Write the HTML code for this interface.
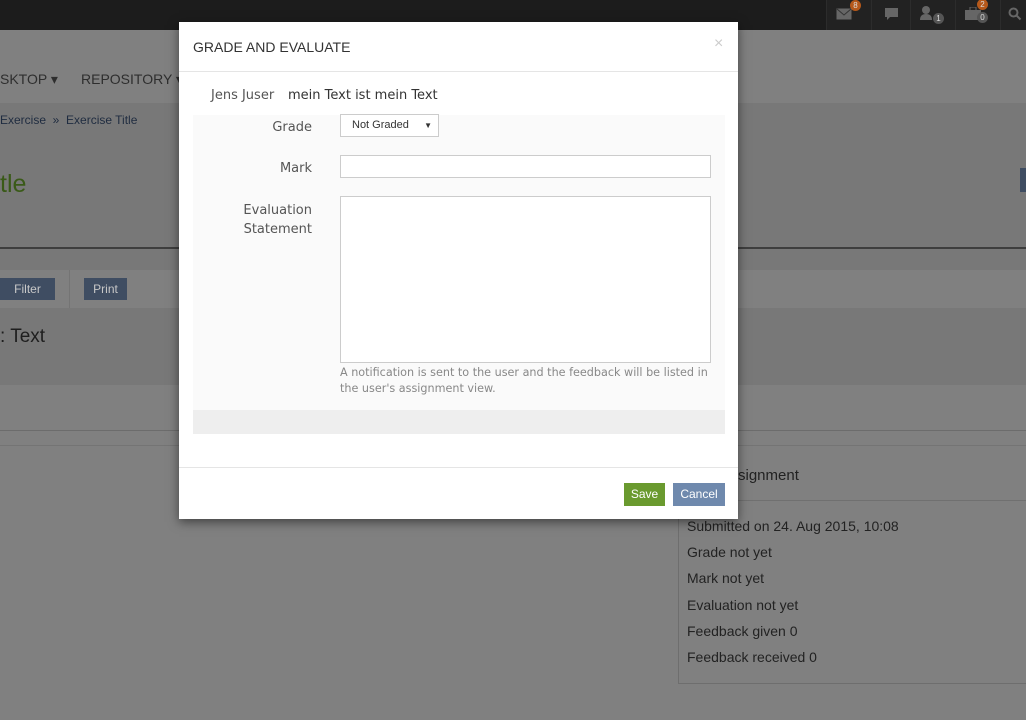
<!DOCTYPE html>
<html style="background:#808080"><head><meta charset="utf-8"><style>
*{box-sizing:border-box;margin:0;padding:0}
body{width:1026px;height:720px;overflow:hidden;background:#808080;font-family:"Liberation Sans",sans-serif;position:relative;color:#2a2a2a}
.a{position:absolute}
.top{left:0;top:0;width:1026px;height:30px;background:#1c1c1c}
.ti{top:0;height:30px;border-left:1px solid #2c2c2c;background:#222}
.badge{position:absolute;border-radius:50%;width:11px;height:11px;font-size:8px;color:#ddd;text-align:center;line-height:11px}
.t{white-space:nowrap}
.btn{color:#c8c8c8;background:#3f4d62;font-size:12px;text-align:center;line-height:22px}
.modal{left:179px;top:22px;width:559px;height:497px;background:#fff;box-shadow:0 3px 10px rgba(0,0,0,.5)}
.lab{color:#555;text-align:right;width:120px;font-family:"DejaVu Sans","Liberation Sans",sans-serif;font-size:13px}
.inp{border:1px solid #ccc;background:#fff}
</style></head><body>
<div class="a" style="left:0;top:0;width:1026px;height:720px;background:#808080"></div>
<div class="a top"></div>
<div class="a ti" style="left:826px;width:45px"><svg class="a" style="left:9px;top:8px" width="16" height="12"><rect x="0.5" y="0.5" width="15" height="11" fill="#666"/><path d="M1 1l7 6 7-6" stroke="#333" fill="none"/></svg><div class="badge" style="left:23px;top:0;background:#b5581a">8</div></div>
<div class="a ti" style="left:871px;width:39px"><svg class="a" style="left:12px;top:7px" width="16" height="14"><path d="M1 1h13v9H6l-3 3v-3H1z" fill="#666"/></svg></div>
<div class="a ti" style="left:910px;width:45px"><svg class="a" style="left:9px;top:5px" width="16" height="16"><circle cx="6" cy="5" r="4" fill="#666"/><path d="M0 15q0-6 6-6t6 6z" fill="#666"/></svg><div class="badge" style="left:22px;top:13px;background:#555">1</div></div>
<div class="a ti" style="left:955px;width:45px"><svg class="a" style="left:9px;top:7px" width="16" height="13"><rect x="0" y="3" width="16" height="10" fill="#666"/><rect x="5" y="0" width="6" height="4" fill="none" stroke="#666"/></svg><div class="badge" style="left:21px;top:-1px;background:#b5581a">2</div><div class="badge" style="left:21px;top:12px;background:#555">0</div></div>
<div class="a ti" style="left:1000px;width:26px"><svg class="a" style="left:7px;top:7px" width="14" height="14"><circle cx="5.5" cy="5.5" r="4" stroke="#666" stroke-width="2" fill="none"/><path d="M8.5 8.5l4 4" stroke="#666" stroke-width="2"/></svg></div>

<div class="a" style="left:0;top:103px;width:1026px;height:144px;background:#787878"></div>
<div class="a" style="left:0;top:247px;width:1026px;height:2px;background:#3e3e3e"></div>
<div class="a" style="left:0;top:249px;width:1026px;height:21px;background:#787878"></div>
<div class="a" style="left:0;top:308px;width:1026px;height:77px;background:#787878"></div>
<div class="a" style="left:0;top:430px;width:1026px;height:1px;background:#6c6c6c"></div>
<div class="a" style="left:0;top:445px;width:1026px;height:1px;background:#747474"></div>
<div class="a" style="left:69px;top:270px;width:1px;height:38px;background:#747474"></div>
<div class="a t" style="left:0;top:71px;font-size:14px;color:#2e2e2e">SKTOP ▾</div>
<div class="a t" style="left:81px;top:71px;font-size:14px;color:#2e2e2e">REPOSITORY ▾</div>
<div class="a t" style="left:0;top:113px;font-size:12px;color:#1f2c40">Exercise &nbsp;»&nbsp; Exercise Title</div>
<div class="a t" style="left:0;top:170px;font-size:25px;color:#3a5a18">tle</div>
<div class="a btn" style="left:0;top:278px;width:55px">Filter</div>
<div class="a btn" style="left:84px;top:278px;width:43px">Print</div>
<div class="a t" style="left:0;top:326px;font-size:19px;color:#1e1e1e">: Text</div>
<div class="a" style="left:1020px;top:168px;width:6px;height:24px;background:#3f4d62"></div>
<div class="a" style="left:678px;top:446px;width:348px;height:238px;border-left:1px solid #6e6e6e;border-bottom:1px solid #6e6e6e"></div>
<div class="a" style="left:678px;top:500px;width:348px;height:1px;background:#707070"></div>
<div class="a t" style="left:738px;top:467px;font-size:15px;color:#222">signment</div>
<div class="a" style="left:687px;top:513px;font-size:14px;color:#222;line-height:26.2px">Submitted on 24. Aug 2015, 10:08<br>Grade not yet<br>Mark not yet<br>Evaluation not yet<br>Feedback given 0<br>Feedback received 0</div>

<div class="a modal">
<div class="a t" style="left:14px;top:17px;font-size:14px;color:#333">GRADE AND EVALUATE</div>
<div class="a" style="left:535px;top:13px;font-size:16px;color:#ccc">×</div>
<div class="a" style="left:0;top:49px;width:559px;height:1px;background:#e5e5e5"></div>
<div class="a t" style="left:32px;top:66px;font-size:13px;color:#555;font-family:'DejaVu Sans',sans-serif">Jens Juser</div>
<div class="a t" style="left:109px;top:66px;font-size:13px;color:#333;font-family:'DejaVu Sans',sans-serif">mein Text ist mein Text</div>
<div class="a" style="left:14px;top:93px;width:532px;height:295px;background:#fafafa"></div>
<div class="a" style="left:14px;top:388px;width:532px;height:24px;background:#eeeeee"></div>
<div class="a lab t" style="left:13px;top:98px">Grade</div>
<div class="a inp" style="left:161px;top:92px;width:99px;height:23px;font-size:11px;color:#333;line-height:21px;padding-left:11px">Not Graded<span style="position:absolute;right:6px;font-size:8px">▼</span></div>
<div class="a lab t" style="left:13px;top:139px">Mark</div>
<div class="a inp" style="left:161px;top:133px;width:371px;height:23px"></div>
<div class="a lab" style="left:13px;top:179px;line-height:19px">Evaluation<br>Statement</div>
<div class="a inp" style="left:161px;top:174px;width:371px;height:167px"></div>
<div class="a" style="left:161px;top:343px;width:372px;color:#888;line-height:16px;font-family:'DejaVu Sans',sans-serif;font-size:11.2px">A notification is sent to the user and the feedback will be listed in the user's assignment view.</div>
<div class="a" style="left:0;top:445px;width:559px;height:1px;background:#e5e5e5"></div>
<div class="a" style="left:445px;top:461px;width:41px;height:23px;background:#6a9a2f;color:#fff;font-size:12px;text-align:center;line-height:23px">Save</div>
<div class="a" style="left:494px;top:461px;width:52px;height:23px;background:#6f89ad;color:#fff;font-size:12px;text-align:center;line-height:23px">Cancel</div>
</div>
</body></html>
